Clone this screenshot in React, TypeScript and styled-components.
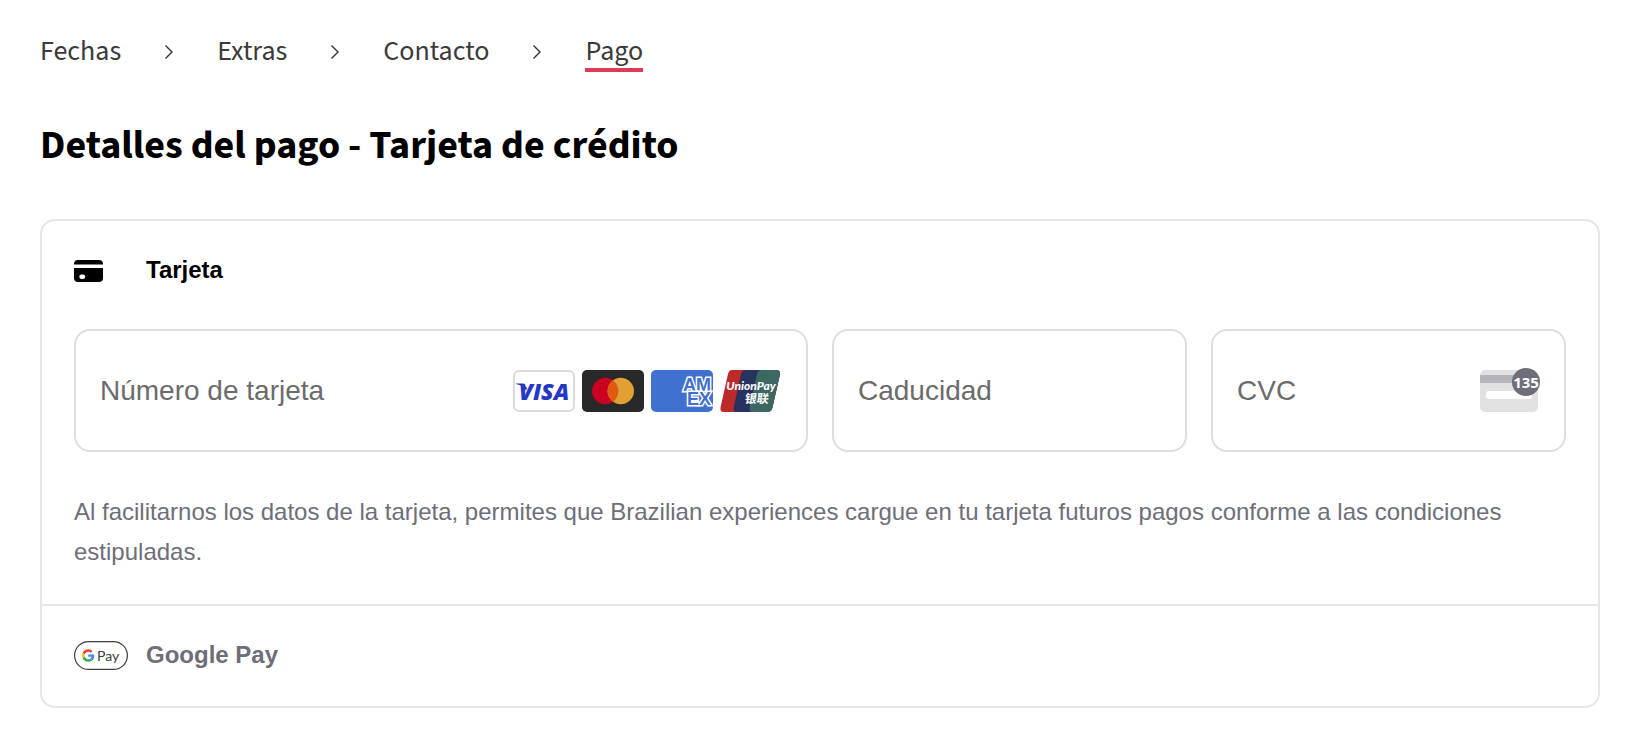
import React from "react";
import styled, { createGlobalStyle } from "styled-components";

const GlobalStyle = createGlobalStyle`
  * { box-sizing: border-box; }
  body {
    margin: 0;
    background: #ffffff;
    color: #000000;
    font-family: "Liberation Sans", Arial, sans-serif;
  }
`;

const brandFont = `"Source Sans 3", "Noto Sans CJK SC", sans-serif`;

const Page = styled.main`
  padding: 34px 34px 22px 40px;
`;

const Steps = styled.ol`
  display: flex;
  align-items: flex-start;
  gap: 44px;
  margin: 0;
  padding: 0;
  list-style: none;
`;

const Step = styled.li`
  display: flex;
  align-items: flex-start;
  gap: 44px;
`;

const StepLink = styled.a<{ $current?: boolean }>`
  display: block;
  font-family: ${brandFont};
  font-size: 28px;
  line-height: 34px;
  color: #3a3a3a;
  text-decoration: none;
  border-bottom: 4px solid ${(p) => (p.$current ? "#de3c55" : "transparent")};
`;

const Chevron = styled.svg`
  display: block;
  width: 8px;
  height: 36px;
`;

const Title = styled.h1`
  margin: 50px 0 49px;
  font-family: ${brandFont};
  font-size: 40px;
  font-weight: 700;
  line-height: 48px;
`;

const Panel = styled.div`
  border: 2px solid #e6e6e6;
  border-radius: 15px;
`;

const Method = styled.section`
  & + & {
    border-top: 2px solid #e6e6e6;
  }
`;

const MethodButton = styled.button<{ $selected?: boolean }>`
  display: grid;
  grid-template-columns: 54px 1fr;
  align-items: center;
  gap: 18px;
  width: 100%;
  height: 100px;
  padding: 0 32px 2px;
  border: 0;
  background: none;
  font: bold 24px/28px "Liberation Sans", Arial, sans-serif;
  text-align: left;
  color: ${(p) => (p.$selected ? "#000000" : "#6d6e78")};
`;

const MethodIcon = styled.svg`
  display: block;
`;

const MethodBody = styled.div`
  padding: 8px 32px 32px;
`;

const Fields = styled.div`
  display: grid;
  grid-template-columns: repeat(4, minmax(0, 1fr));
  gap: 24px;
`;

const Field = styled.label<{ $span?: number }>`
  grid-column: span ${(p) => p.$span ?? 1};
  display: flex;
  align-items: center;
  height: 123px;
  padding: 0 24px;
  border: 2px solid #dedede;
  border-radius: 16px;
`;

const FieldInput = styled.input`
  flex: 1;
  min-width: 0;
  height: 64px;
  padding: 0;
  border: 0;
  outline: 0;
  background: none;
  font: 28px/32px "Liberation Sans", Arial, sans-serif;
  color: #30313d;
  &::placeholder {
    color: #6b6b6b;
    opacity: 1;
  }
`;

const Brands = styled.span`
  display: flex;
  gap: 7px;
`;

const BrandMark = styled.svg`
  display: block;
  width: 62px;
  height: 42px;
`;

const Terms = styled.p`
  margin: 40px 0 0;
  font-size: 24px;
  line-height: 40px;
  color: #6d6e78;
`;

const steps = ["Fechas", "Extras", "Contacto", "Pago"];

const Visa = () => (
  <BrandMark viewBox="0 0 62 42" role="img" aria-label="Visa">
    <rect x="1" y="1" width="60" height="40" rx="5" fill="#fff" stroke="#d0d0d0" strokeWidth="1.5" />
    <path d="M3 13.500h8l3 5-1 2C11 17 8 15 3 14z" fill="#2438c4" />
    <text x="31" y="29.500" textAnchor="middle" fontFamily="Open Sans" fontSize="23" fontWeight="800" fontStyle="italic" fill="#2438c4">
      VISA
    </text>
  </BrandMark>
);

const Mastercard = () => (
  <BrandMark viewBox="0 0 62 42" role="img" aria-label="Mastercard">
    <rect width="62" height="42" rx="5" fill="#282828" />
    <circle cx="23.200" cy="21" r="13.200" fill="#cb0022" />
    <circle cx="38.800" cy="21" r="13.200" fill="#e1a034" />
    <path d="M31 10.300a13.200 13.200 0 0 1 0 21.400a13.200 13.200 0 0 1 0-21.400z" fill="#e05a10" />
  </BrandMark>
);

const Amex = () => (
  <BrandMark viewBox="0 0 62 42" role="img" aria-label="American Express">
    <clipPath id="amex-card">
      <rect width="62" height="42" rx="5" />
    </clipPath>
    <g clipPath="url(#amex-card)">
      <rect width="62" height="42" fill="#4070d0" />
      <text fontFamily="Liberation Sans" fontSize="18" fontWeight="700" fill="#4070d0" stroke="#fff" strokeWidth="3" paintOrder="stroke">
        <tspan x="32" y="20.500">AM</tspan>
        <tspan x="36" y="34.500">EX</tspan>
      </text>
    </g>
  </BrandMark>
);

const UnionPay = () => (
  <BrandMark viewBox="0 0 62 42" role="img" aria-label="UnionPay">
    <clipPath id="unionpay-card">
      <path d="M12 0h43.500q5.500 0 4.300 5l-7.500 33q-1 4-5.500 4H4.500Q-.5 42 .6 37L8 4q1-4 4-4z" />
    </clipPath>
    <g clipPath="url(#unionpay-card)">
      <rect width="62" height="42" fill="#bd2a2a" />
      <path d="M26 0Q22 0 21 4L14 36q-1.500 6 2 6h46V0z" fill="#27335f" />
      <path d="M42 0Q38 0 37 4L30 36q-1.500 6 2 6h32V0z" fill="#3c6863" />
    </g>
    <text x="31" y="20" textAnchor="middle" fontFamily="Lato" fontSize="12" fontWeight="900" fontStyle="italic" fill="#fff">
      UnionPay
    </text>
    <g transform="skewX(-8)">
      <text x="29" y="33" fontFamily="Noto Sans CJK SC" fontSize="12" fontWeight="700" fill="#fff">
        银联
      </text>
    </g>
  </BrandMark>
);

const CvcHint = () => (
  <BrandMark viewBox="0 0 62 42" role="img" aria-label="Código de seguridad" overflow="visible">
    <rect x="2" y="0" width="58" height="42" rx="5" fill="#e1e1e4" />
    <rect x="2" y="5" width="58" height="8" fill="#b4b4b9" />
    <rect x="8" y="21" width="46" height="8" rx="3" fill="#fff" />
    <circle cx="48" cy="12" r="14" fill="#6d6e78" />
    <text x="48" y="17.500" textAnchor="middle" fontFamily="Liberation Sans Narrow, Open Sans" fontSize="15" fontWeight="700" fill="#fff">
      135
    </text>
  </BrandMark>
);

const CardIcon = () => (
  <MethodIcon width="54" height="26" viewBox="0 -2 54 26" aria-hidden="true">
    <path d="M0 5.500V5q0-4 4-4h21q4 0 4 4v.5z" />
    <path d="M0 9h29v10q0 4-4 4H4q-4 0-4-4zm7.500 6.500a2.200 2.200 0 0 0 0 4.400h1.500a2.200 2.200 0 0 0 0-4.400z" fillRule="evenodd" />
  </MethodIcon>
);

const GooglePayIcon = () => (
  <MethodIcon width="54" height="29" viewBox="0 0 54 29" aria-hidden="true">
    <rect x=".6" y=".6" width="52.800" height="27.800" rx="13.900" fill="#fff" stroke="#3c4043" strokeWidth="1.200" />
    <g transform="translate(8 8.300) scale(.26)">
      <path fill="#ea4335" d="M24 9.500c3.540 0 6.710 1.220 9.210 3.600l6.850-6.850C35.900 2.380 30.470 0 24 0 14.620 0 6.510 5.380 2.560 13.220l7.980 6.190C12.430 13.720 17.740 9.500 24 9.500z" />
      <path fill="#4285f4" d="M46.980 24.550c0-1.570-.15-3.090-.38-4.550H24v9.020h12.940c-.58 2.960-2.260 5.480-4.780 7.180l7.730 6c4.510-4.180 7.090-10.360 7.090-17.650z" />
      <path fill="#fbbc05" d="M10.530 28.590c-.48-1.450-.76-2.990-.76-4.590s.27-3.140.76-4.590l-7.980-6.190C.92 16.460 0 20.120 0 24c0 3.880.92 7.540 2.560 10.780l7.970-6.190z" />
      <path fill="#34a853" d="M24 48c6.480 0 11.930-2.130 15.890-5.810l-7.730-6c-2.150 1.450-4.920 2.300-8.160 2.300-6.260 0-11.570-4.220-13.470-9.910l-7.980 6.190C6.510 42.620 14.620 48 24 48z" />
    </g>
    <text x="23" y="20" fontFamily="Lato" fontSize="14" fontWeight="400" fill="#3c4043">
      Pay
    </text>
  </MethodIcon>
);

export default function App() {
  return (
    <Page>
      <GlobalStyle />
      <nav aria-label="Pasos de la reserva">
        <Steps>
          {steps.map((step, i) => {
            const last = i === steps.length - 1;
            return (
              <Step key={step}>
                <StepLink href={`#${step.toLowerCase()}`} $current={last} aria-current={last ? "step" : undefined}>
                  {step}
                </StepLink>
                {!last && (
                  <Chevron viewBox="0 0 8 36" aria-hidden="true">
                    <path d="M.5 11.500L7 18L.5 24.500" fill="none" stroke="#3a3a3a" strokeWidth="1.500" />
                  </Chevron>
                )}
              </Step>
            );
          })}
        </Steps>
      </nav>

      <Title>Detalles del pago - Tarjeta de crédito</Title>

      <Panel>
        <Method>
          <MethodButton type="button" $selected aria-expanded="true" aria-controls="card-form">
            <CardIcon />
            Tarjeta
          </MethodButton>
          <MethodBody id="card-form">
            <Fields>
              <Field $span={2}>
                <FieldInput aria-label="Número de tarjeta" placeholder="Número de tarjeta" inputMode="numeric" autoComplete="cc-number" />
                <Brands>
                  <Visa />
                  <Mastercard />
                  <Amex />
                  <UnionPay />
                </Brands>
              </Field>
              <Field>
                <FieldInput aria-label="Caducidad" placeholder="Caducidad" inputMode="numeric" autoComplete="cc-exp" />
              </Field>
              <Field>
                <FieldInput aria-label="CVC" placeholder="CVC" inputMode="numeric" autoComplete="cc-csc" />
                <CvcHint />
              </Field>
            </Fields>
            <Terms>
              Al facilitarnos los datos de la tarjeta, permites que Brazilian experiences cargue en tu tarjeta futuros
              pagos conforme a las condiciones estipuladas.
            </Terms>
          </MethodBody>
        </Method>
        <Method>
          <MethodButton type="button" aria-expanded="false">
            <GooglePayIcon />
            Google Pay
          </MethodButton>
        </Method>
      </Panel>
    </Page>
  );
}
